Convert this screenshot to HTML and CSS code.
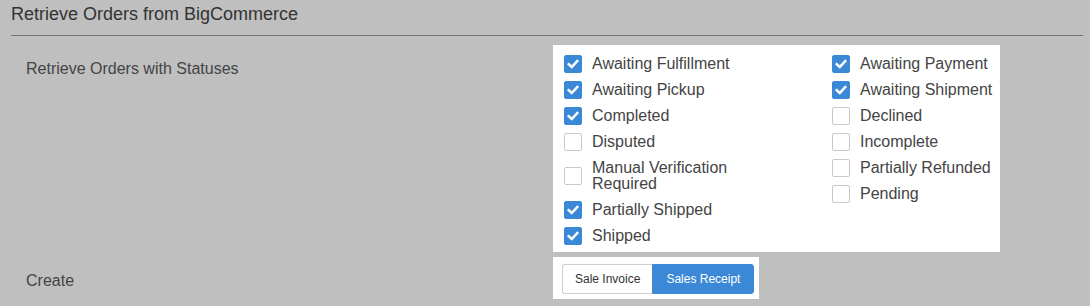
FILE: index.html
```html
<!DOCTYPE html>
<html>
<head>
<meta charset="utf-8">
<link rel="stylesheet" href="styles.css">
</head>
<body>
<div class="page">
  <h2 class="section-title">Retrieve Orders from BigCommerce</h2>

  <div class="row">
    <div class="row-label">Retrieve Orders with Statuses</div>
    <div class="status-panel">
      <div class="status-col col-left">
        <label class="item"><span class="cb checked"><svg viewBox="0 0 18 18"><path d="M4.2 9.2 L7.6 12.4 L13.8 5.6"/></svg></span><span class="text">Awaiting Fulfillment</span></label>
        <label class="item"><span class="cb checked"><svg viewBox="0 0 18 18"><path d="M4.2 9.2 L7.6 12.4 L13.8 5.6"/></svg></span><span class="text">Awaiting Pickup</span></label>
        <label class="item"><span class="cb checked"><svg viewBox="0 0 18 18"><path d="M4.2 9.2 L7.6 12.4 L13.8 5.6"/></svg></span><span class="text">Completed</span></label>
        <label class="item"><span class="cb"></span><span class="text">Disputed</span></label>
        <label class="item"><span class="cb"></span><span class="text">Manual Verification<br>Required</span></label>
        <label class="item"><span class="cb checked"><svg viewBox="0 0 18 18"><path d="M4.2 9.2 L7.6 12.4 L13.8 5.6"/></svg></span><span class="text">Partially Shipped</span></label>
        <label class="item"><span class="cb checked"><svg viewBox="0 0 18 18"><path d="M4.2 9.2 L7.6 12.4 L13.8 5.6"/></svg></span><span class="text">Shipped</span></label>
      </div>
      <div class="status-col">
        <label class="item"><span class="cb checked"><svg viewBox="0 0 18 18"><path d="M4.2 9.2 L7.6 12.4 L13.8 5.6"/></svg></span><span class="text">Awaiting Payment</span></label>
        <label class="item"><span class="cb checked"><svg viewBox="0 0 18 18"><path d="M4.2 9.2 L7.6 12.4 L13.8 5.6"/></svg></span><span class="text">Awaiting Shipment</span></label>
        <label class="item"><span class="cb"></span><span class="text">Declined</span></label>
        <label class="item"><span class="cb"></span><span class="text">Incomplete</span></label>
        <label class="item"><span class="cb"></span><span class="text">Partially Refunded</span></label>
        <label class="item"><span class="cb"></span><span class="text">Pending</span></label>
      </div>
    </div>
  </div>

  <div class="row row-create">
    <div class="row-label">Create</div>
    <div class="btn-panel">
      <div class="btn-group">
        <span class="btn">Sale Invoice</span>
        <span class="btn active">Sales Receipt</span>
      </div>
    </div>
  </div>
</div>
</body>
</html>
```
FILE: styles.css
```css
* { box-sizing: border-box; }

html, body {
  margin: 0;
  padding: 0;
  background: #bfbfbf;
}

body {
  font-family: "Liberation Sans", Arial, sans-serif;
  color: #444;
  width: 1090px;
  height: 306px;
  overflow: hidden;
}

.page {
  padding: 0 7px 0 11px;
}

.section-title {
  margin: 0;
  padding: 3px 0 10px 0;
  font-size: 18px;
  line-height: 22px;
  font-weight: normal;
  color: #333;
  border-bottom: 1px solid #737373;
}

.row {
  display: flex;
  align-items: flex-start;
  padding-left: 15px;
  margin-top: 9px;
}

.row-label {
  width: 527px;
  flex: none;
  font-size: 16px;
  line-height: 20px;
  padding-top: 14px;
  color: #444;
  white-space: nowrap;
}

.status-panel {
  width: 447px;
  background: #fff;
  padding: 10px 0 7px 11px;
  display: grid;
  grid-template-columns: 268px auto;
}

.status-col {
  display: flex;
  flex-direction: column;
  gap: 8px;
}

.item {
  display: flex;
  align-items: center;
  min-height: 18px;
  white-space: nowrap;
}

.cb {
  width: 18px;
  height: 18px;
  flex: none;
  border: 1px solid #c9c9c9;
  border-radius: 2px;
  background: #fff;
  margin-right: 10px;
  display: flex;
}

.cb.checked {
  background: #3b88d6;
  border-color: #3b88d6;
}

.cb svg {
  width: 16px;
  height: 16px;
}

.cb svg path {
  fill: none;
  stroke: #fff;
  stroke-width: 2.8;
  stroke-linecap: square;
  stroke-linejoin: miter;
}

.text {
  font-size: 16px;
  line-height: 16px;
  padding: 1px 0;
  color: #444;
}

.row-create {
  margin-top: 5px;
}

.btn-panel {
  background: #fff;
  padding: 7px 5px 5px 9px;
}

.btn-group {
  display: flex;
}

.btn {
  height: 30px;
  display: flex;
  align-items: center;
  font-size: 12px;
  line-height: 14px;
  border: 1px solid #cfcfcf;
  padding: 0 12px;
  color: #333;
  background: #fff;
  white-space: nowrap;
}

.btn:first-child {
  border-radius: 3px 0 0 3px;
  border-right: none;
}

.btn.active {
  background: #3b88d6;
  border-color: #3b88d6;
  color: #fff;
  border-radius: 0 3px 3px 0;
  padding: 0 13px;
}
```
